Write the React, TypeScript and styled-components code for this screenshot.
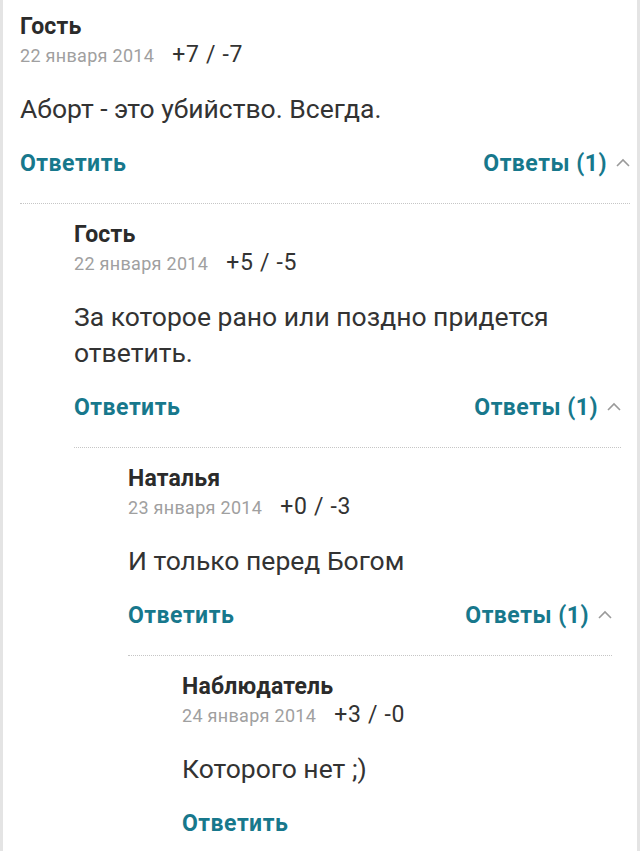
import React from "react";
import styled, { createGlobalStyle } from "styled-components";

type CommentData = {
  author: string
  date: string
  score: string
  text: string
  replies?: CommentData[]
}

const thread: CommentData = {
  author: "Гость",
  date: "22 января 2014",
  score: "+7 / -7",
  text: "Аборт - это убийство. Всегда.",
  replies: [
    {
      author: "Гость",
      date: "22 января 2014",
      score: "+5 / -5",
      text: "За которое рано или поздно придется ответить.",
      replies: [
        {
          author: "Наталья",
          date: "23 января 2014",
          score: "+0 / -3",
          text: "И только перед Богом",
          replies: [
            {
              author: "Наблюдатель",
              date: "24 января 2014",
              score: "+3 / -0",
              text: "Которого нет ;)",
            },
          ],
        },
      ],
    },
  ],
}

const GlobalStyle = createGlobalStyle`
  html, body {
    margin: 0;
    padding: 0;
    background: #ffffff;
  }
  body {
    font-family: Roboto, "Noto Sans", "Liberation Sans", sans-serif;
    color: #333333;
  }
`

const Page = styled.div`
  box-sizing: border-box;
  width: 640px;
  min-height: 851px;
  margin: 0 auto;
  padding: 15px 7px 0 17px;
  border-left: 3px solid #e4e4e4;
  border-right: 3px solid #e4e4e4;
  overflow: hidden;
`

const Item = styled.div`
  display: flex;
  flex-direction: column;
`

const Author = styled.div`
  font-size: 23px;
  line-height: 24px;
  font-weight: 700;
  letter-spacing: 0.2px;
  color: #2b2b2b;
`

const Meta = styled.div`
  display: flex;
  align-items: baseline;
  gap: 18px;
  margin-top: 2px;
  line-height: 28px;
`

const DateText = styled.span`
  font-size: 18px;
  letter-spacing: 0.3px;
  color: #a0a0a0;
`

const Score = styled.span`
  font-size: 23px;
  letter-spacing: 0.7px;
  color: #333333;
`

const Body = styled.p`
  margin: 21px 0 0;
  font-size: 26.5px;
  line-height: 36px;
  color: #333333;
`

const Actions = styled.div`
  display: flex;
  align-items: center;
  justify-content: space-between;
  margin-top: 23px;
  line-height: 28px;
`

const ActionLink = styled.a`
  display: inline-flex;
  align-items: center;
  gap: 9px;
  font-size: 23px;
  font-weight: 700;
  letter-spacing: 0.5px;
  color: #17788c;
  text-decoration: none;
  cursor: pointer;
`

const Chevron = styled.svg`
  width: 14px;
  height: 9px;
  margin-top: -4px;
  stroke: #9a9a9a;
  stroke-width: 1.6;
  fill: none;
`

const Replies = styled.div`
  margin-top: 25px;
  padding-top: 19px;
  border-top: 1px dotted #c6c6c6;
`

const Nested = styled.div`
  margin-left: 54px;
  margin-right: 9px;
`

const Comment = ({ data }: { data: CommentData }) => {
  const count = data.replies?.length ?? 0
  return (
    <Item>
      <Author>{data.author}</Author>
      <Meta>
        <DateText>{data.date}</DateText>
        <Score>{data.score}</Score>
      </Meta>
      <Body>{data.text}</Body>
      <Actions>
        <ActionLink>Ответить</ActionLink>
        {count > 0 && (
          <ActionLink>
            Ответы ({count})
            <Chevron viewBox="0 0 14 9">
              <path d="M1 8 L7 2 L13 8" />
            </Chevron>
          </ActionLink>
        )}
      </Actions>
      {count > 0 && (
        <Replies>
          {data.replies!.map((reply, i) => (
            <Nested key={i}>
              <Comment data={reply} />
            </Nested>
          ))}
        </Replies>
      )}
    </Item>
  )
}

export default function App() {
  return (
    <>
      <GlobalStyle />
      <Page>
        <Comment data={thread} />
      </Page>
    </>
  )
}
